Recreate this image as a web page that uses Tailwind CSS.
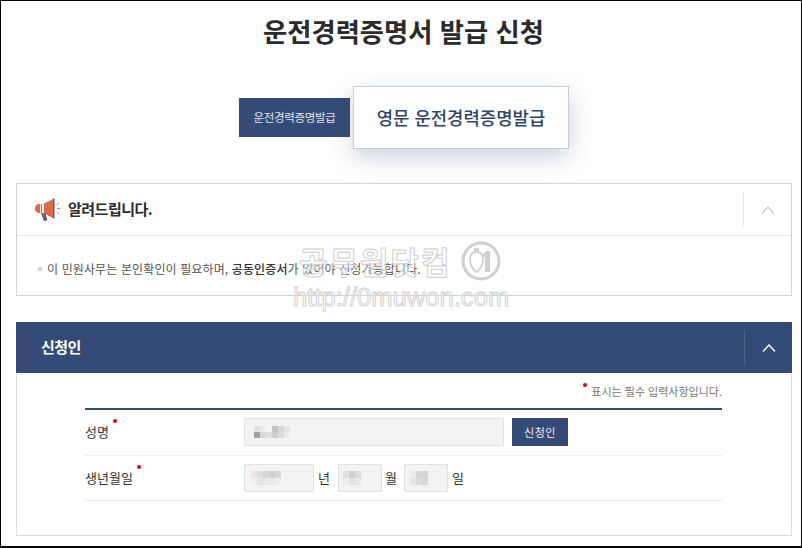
<!DOCTYPE html>
<html lang="ko">
<head>
    <meta charset="UTF-8">
    <meta name="viewport" content="width=device-width, initial-scale=1.0">
    <title>운전경력증명서 발급 신청</title>
    <script src="https://cdn.jsdelivr.net/npm/@tailwindcss/browser@4"></script>
</head>
<body class="m-0 bg-black">
    <div class="relative w-[802px] h-[548px] overflow-hidden bg-white border-[1px] border-b-[2px] border-black font-['Noto_Sans_CJK_KR','Noto_Sans',sans-serif] text-[#333]">

        <h1 class="h-[85px] pt-[9px] pl-[5px] text-center text-[26.300px] leading-[42px] font-bold text-[#2b2b2b]">운전경력증명서 발급 신청</h1>

        <!-- tabs -->
        <div class="h-[97px] flex items-start pl-[238px]">
            <a class="mt-[12px] w-[111px] h-[39px] flex items-center justify-center bg-[#334b76] text-white/85 text-[11.500px] tracking-[-0.3px]">운전경력증명발급</a>
            <a class="ml-[3px] w-[216px] h-[63px] flex items-center justify-center bg-white border border-[#c6cdda] shadow-[0_8px_24px_rgba(51,75,118,0.25)] text-[#2f4468] text-[17.800px] font-medium">영문 운전경력증명발급</a>
        </div>

        <!-- notice -->
        <section class="ml-[15px] mr-[9px] h-[113px] border border-[#d4d4d4]">
            <div class="h-[52px] flex items-center border-b border-[#e8e8e8]">
                <svg class="ml-[17px] w-[27px] h-[26px]" viewBox="0 0 27 26">
                    <path d="M7 16l2.500 7q1 1.500 2.600.800t1-2l-2-6z" fill="#5b6472"/>
                    <path d="M5 7h3v9H5q-4-.500-4-4.500T5 7z" fill="#e0674a"/>
                    <path d="M6 6.800h1v9.400H6zM8.500 6.500h1.300v10H8.500z" fill="#f3e5df"/>
                    <path d="M10 6.500L19 2v19l-9-4.500z" fill="#e0674a"/>
                    <path d="M19 1.500h1.500v20H19z" fill="#5b6472"/>
                    <path d="M22.500 8l2.500-2M23 11.500h3.500M22.500 15l2.500 2" stroke="#8a8a8a" stroke-width="0.800" fill="none"/>
                </svg>
                <h2 class="ml-[7px] text-[15px] font-bold tracking-[-0.5px] text-[#2b2b2b]">알려드립니다.</h2>
                <div class="ml-auto w-[48px] h-[35px] flex items-center justify-center border-l border-[#e8e8e8]">
                    <svg class="w-[14px] h-[8px]" viewBox="0 0 14 8"><path d="M1 7.500L7 1l6 6.500" stroke="#b5b5b5" stroke-width="1.100" fill="none"/></svg>
                </div>
            </div>
            <p class="pl-[21px] pt-[23px] flex items-center text-[12px] leading-[20px] tracking-[0.12px] text-[#555]">
                <span class="w-[4px] h-[4px] bg-[#d4d4d4] mr-[5px]"></span>
                <span>이 민원사무는 본인확인이 필요하며, <b class="font-medium text-[#333]">공동인증서</b>가 있어야 신청가능합니다.</span>
            </p>
        </section>

        <!-- applicant -->
        <section class="ml-[15px] mr-[9px] mt-[26px] h-[214px] border border-t-0 border-[#dcdcdc]">
            <div class="h-[51px] -mx-px flex items-center bg-[#334b76] text-white">
                <h2 class="ml-[25px] text-[15px] font-bold tracking-[-0.5px]">신청인</h2>
                <div class="ml-auto w-[48px] h-[35px] flex items-center justify-center border-l border-[#4a618a]">
                    <svg class="w-[14px] h-[8px]" viewBox="0 0 14 8"><path d="M1 7.500L7 1l6 6.500" stroke="#fff" stroke-width="1.400" fill="none"/></svg>
                </div>
            </div>

            <div class="ml-[68px] w-[637px]">
                <p class="h-[35px] flex justify-end items-end pb-[9px] text-[11px] leading-[16px] text-[#777]">
                    <span class="w-[4px] h-[4px] rounded-full bg-[#c8101c] mr-[4px] mb-[12px]"></span>표시는 필수 입력사항입니다.
                </p>
                <div class="h-[48px] pb-[1px] flex items-center border-t-2 border-[#334b76] border-b border-b-[#ececec] text-[13px]">
                    <span class="relative w-[159px]">성명<i class="absolute left-[28px] -top-[3px] w-[4px] h-[4px] rounded-full bg-[#c8101c]"></i></span>
                    <div class="w-[260px] h-[28px] flex items-center pl-[9px] bg-[#f3f3f3] border border-[#e2e2e2]">
                        <div class="grid grid-cols-[repeat(6,6px)] grid-rows-[repeat(2,6px)]">
                            <i class="bg-[#e2e2e2]"></i><i class="bg-[#ebebeb]"></i><i class="bg-[#f3f3f3]"></i><i class="bg-[#c4c4c4]"></i><i class="bg-[#d8d8d8]"></i><i class="bg-[#e6e6e6]"></i>
                            <i class="bg-[#a0a0a0]"></i><i class="bg-[#d8d8d8]"></i><i class="bg-[#e0e0e0]"></i><i class="bg-[#cecece]"></i><i class="bg-[#dcdcdc]"></i><i class="bg-[#ebebeb]"></i>
                        </div>
                    </div>
                    <button class="ml-[8px] w-[56px] h-[28px] bg-[#334b76] text-white/90 text-[11px] tracking-[0.5px]">신청인</button>
                </div>
                <div class="h-[45px] flex items-center border-b border-[#ececec] text-[13px]">
                    <span class="relative w-[159px]">생년월일<i class="absolute left-[52px] -top-[3px] w-[4px] h-[4px] rounded-full bg-[#c8101c]"></i></span>
                    <div class="w-[70px] h-[28px] flex items-center pl-[6px] bg-[#f3f3f3] border border-[#e2e2e2]">
                        <div class="grid grid-cols-[repeat(5,6px)] grid-rows-[repeat(2,7px)]">
                            <i class="bg-[#ece4de]"></i><i class="bg-[#dedede]"></i><i class="bg-[#d6d6d6]"></i><i class="bg-[#cfcfcf]"></i><i class="bg-[#d8d8d8]"></i>
                            <i class="bg-[#efefef]"></i><i class="bg-[#e4e4e4]"></i><i class="bg-[#e6e6e6]"></i><i class="bg-[#e8e8e8]"></i><i class="bg-[#ededed]"></i>
                        </div>
                    </div>
                    <span class="w-[24px] pl-[4px]">년</span>
                    <div class="w-[44px] h-[28px] flex items-center pl-[4px] bg-[#f3f3f3] border border-[#e2e2e2]">
                        <div class="grid grid-cols-[repeat(3,6px)] grid-rows-[repeat(2,7px)]">
                            <i class="bg-[#e0e0e0]"></i><i class="bg-[#cfcfcf]"></i><i class="bg-[#dcdcdc]"></i>
                            <i class="bg-[#ececec]"></i><i class="bg-[#e2e2e2]"></i><i class="bg-[#e8e8e8]"></i>
                        </div>
                    </div>
                    <span class="w-[22px] pl-[3px]">월</span>
                    <div class="w-[44px] h-[28px] flex items-center pl-[5px] bg-[#f3f3f3] border border-[#e2e2e2]">
                        <div class="grid grid-cols-[repeat(3,6px)] grid-rows-[repeat(2,7px)]">
                            <i class="bg-[#ededed]"></i><i class="bg-[#d6d6d6]"></i><i class="bg-[#d6d6d6]"></i>
                            <i class="bg-[#e4e4e4]"></i><i class="bg-[#dedede]"></i><i class="bg-[#d8d8d8]"></i>
                        </div>
                    </div>
                    <span class="pl-[4px]">일</span>
                </div>
            </div>
        </section>

        <!-- watermark -->
        <div class="absolute left-[292px] top-[240px] w-[230px] pointer-events-none text-white/40">
            <div class="flex items-center pl-[6px]">
                <span class="text-[31px] leading-[38px] font-bold tracking-[2px] [-webkit-text-stroke:1px_#cfcfcf]">공무원닷컴</span>
                <svg class="ml-[9px] w-[40px] h-[40px]" viewBox="0 0 40 40">
                    <circle cx="20" cy="20" r="18" fill="none" stroke="#d0d0d0" stroke-width="3"/>
                    <path d="M14 7l1.500 3 1.500-3v4q5 1 5 7 0 8-6.500 13Q9 26 9 18q0-6 5-7z" fill="none" stroke="#d0d0d0" stroke-width="1.800"/>
                    <path d="M25 10h4v21h-5V16h-2v-3q2 0 3-3z" fill="#d0d0d0"/>
                </svg>
            </div>
            <div class="mt-[2px] text-[25.600px] leading-[28px] font-['Liberation_Sans',sans-serif] [-webkit-text-stroke:1px_#d2d2d2]">http://0muwon.com</div>
        </div>
    </div>
</body>
</html>
